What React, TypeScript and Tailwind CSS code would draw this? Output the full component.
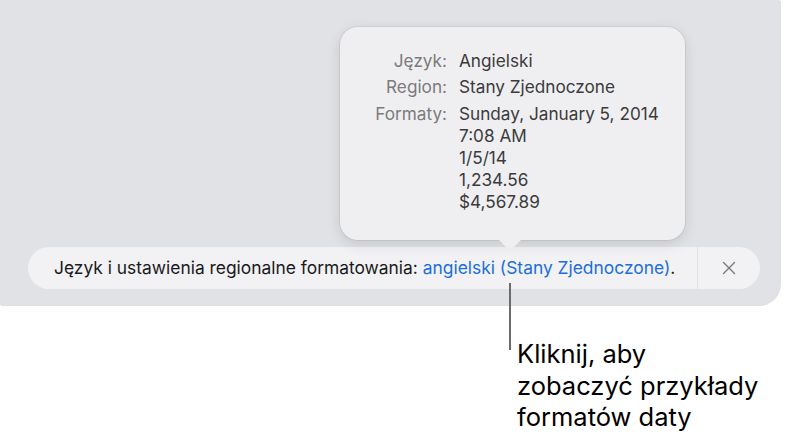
import React from "react";

const ui = { fontFamily: "Inter, 'Noto Sans', sans-serif" };
const callout = { fontFamily: "Inter, 'Noto Sans', sans-serif" };

function InfoPopover() {
  const rows: [string, string[]][] = [
    ["Język:", ["Angielski"]],
    ["Region:", ["Stany Zjednoczone"]],
    ["Formaty:", ["Sunday, January 5, 2014", "7:08 AM", "1/5/14", "1,234.56", "$4,567.89"]],
  ];
  return (
    <div className="absolute left-[340px] top-[27px] w-[345px] h-[213px]" style={ui}>
      <div className="relative h-full w-full rounded-[18px] bg-[#efeff1] shadow-[0_0_0_1px_rgba(0,0,0,0.06),0_4px_14px_rgba(0,0,0,0.12)] pt-[22.5px]">
        <div className="grid grid-cols-[107px_1fr] gap-x-[12px] gap-y-[4.5px] text-[17.2px] leading-[22px]">
          {rows.map(([label, values]) => (
            <React.Fragment key={label}>
              <div className="text-right text-[#7b7b7d]">{label}</div>
              <div className="text-[#3b3b3d]">
                {values.map((v) => (
                  <div key={v}>{v}</div>
                ))}
              </div>
            </React.Fragment>
          ))}
        </div>
      </div>
      {/* pointer toward the link */}
      <svg className="absolute left-[157px] top-[211px]" width="26" height="12" viewBox="0 0 26 12">
        <path d="M0 0 L9 9 Q13 12.5 17 9 L26 0 Z" fill="#efeff1" />
      </svg>
    </div>
  );
}

export default function App() {
  return (
    <div className="relative w-[785px] h-[442px] overflow-hidden bg-white">
      <div className="flex h-[305px] w-[780px] flex-col justify-end rounded-br-[22px] bg-[#e1e2e5] pb-[16px] pl-[28px] pr-[20px] shadow-[1px_1px_0_rgba(0,0,0,0.12)]">
        <div className="flex h-[42px] items-stretch rounded-full bg-[#f2f2f4]" style={ui}>
          <div className="flex flex-1 items-center whitespace-nowrap pl-[26px] text-[17.4px] text-[#1a1a1c]">
            <span>Język i ustawienia regionalne formatowania:&nbsp;</span>
            <span className="text-[#1c6fd8]">angielski (Stany Zjednoczone)</span>
            <span>.</span>
          </div>
          <div className="w-px bg-[#e2e2e5]" />
          <div className="flex w-[62px] items-center justify-center">
            <svg width="14" height="14" viewBox="0 0 14 14">
              <path d="M1.5 1.5 L12.5 12.5 M12.5 1.5 L1.5 12.5" stroke="#7a7a7c" strokeWidth="1.4" strokeLinecap="round" />
            </svg>
          </div>
        </div>
      </div>

      <InfoPopover />

      {/* callout leader line */}
      <div className="absolute left-[509px] top-[283px] h-[67px] w-[2px] bg-[#6b6b6b]" />

      <div className="ml-[517px] mt-[33px] text-[25.5px] leading-[31.5px] text-black" style={callout}>
        <div>Kliknij, aby</div>
        <div>zobaczyć przykłady</div>
        <div>formatów daty</div>
      </div>
    </div>
  );
}
